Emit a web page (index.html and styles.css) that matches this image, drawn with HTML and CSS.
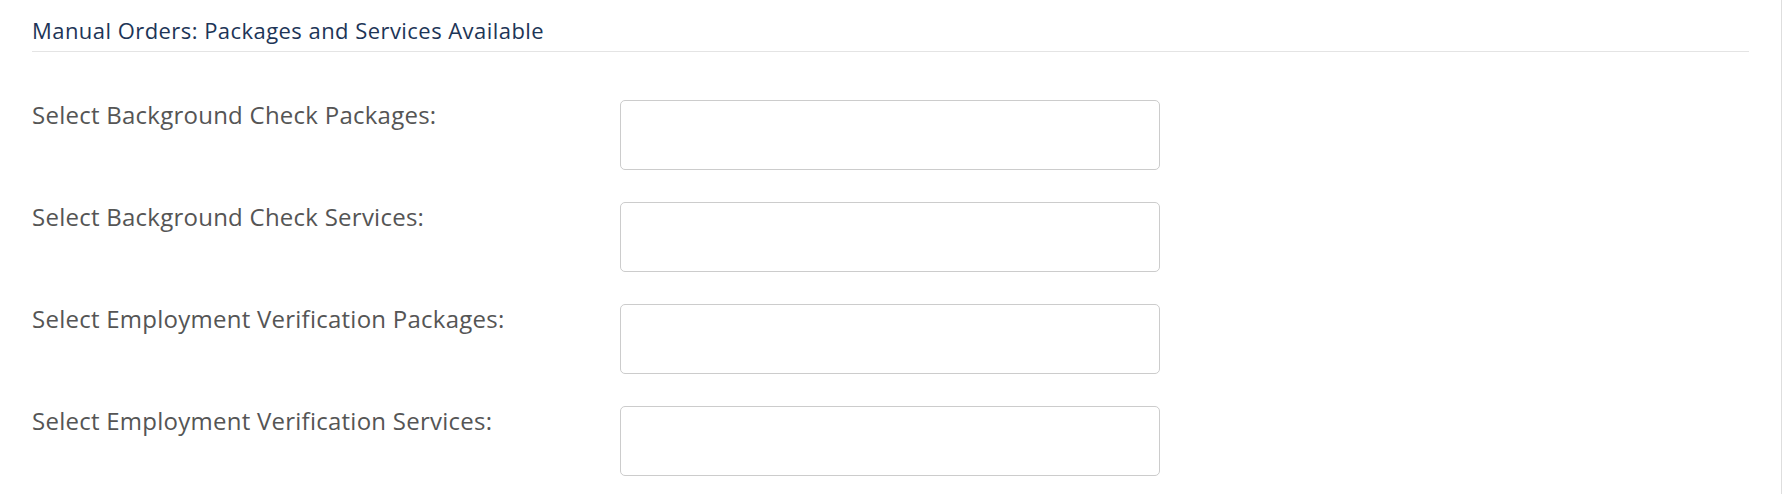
FILE: index.html
```html
<!DOCTYPE html>
<html lang="en">
<head>
  <meta charset="UTF-8">
  <meta name="viewport" content="width=device-width, initial-scale=1.0">
  <title>Manual Orders</title>
  <link rel="stylesheet" href="styles.css">
</head>
<body>
  <div class="page">
    <div class="section">
      <h3 class="section-title">Manual Orders: Packages and Services Available</h3>

      <div class="form-grid">
        <label for="bgPackages">Select Background Check Packages:</label>
        <div class="select-box" id="bgPackages"></div>

        <label for="bgServices">Select Background Check Services:</label>
        <div class="select-box" id="bgServices"></div>

        <label for="evPackages">Select Employment Verification Packages:</label>
        <div class="select-box" id="evPackages"></div>

        <label for="evServices">Select Employment Verification Services:</label>
        <div class="select-box" id="evServices"></div>
      </div>
    </div>
  </div>
</body>
</html>
```

FILE: styles.css
```css
body {
  margin: 0;
  font-family: "Open Sans", Lato, sans-serif;
  background-color: #fff;
}

.page {
  min-height: 100vh;
  border-right: 1px solid #dedede;
  box-sizing: border-box;
}

.section {
  padding: 16px 32px 0 32px;
}

.section-title {
  margin: 0;
  padding-bottom: 6px;
  font-size: 22px;
  font-weight: normal;
  letter-spacing: 0.45px;
  line-height: 29px;
  color: #1d3557;
  border-bottom: 1px solid #e4e4e4;
}

.form-grid {
  display: grid;
  grid-template-columns: 588px 540px;
  grid-auto-rows: 70px;
  row-gap: 32px;
  margin-top: 48px;
}

label {
  font-size: 24px;
  letter-spacing: 0.25px;
  line-height: 30px;
  color: #555;
}

.select-box {
  border: 1px solid #ccc;
  border-radius: 5px;
  background-color: #fff;
}
```
